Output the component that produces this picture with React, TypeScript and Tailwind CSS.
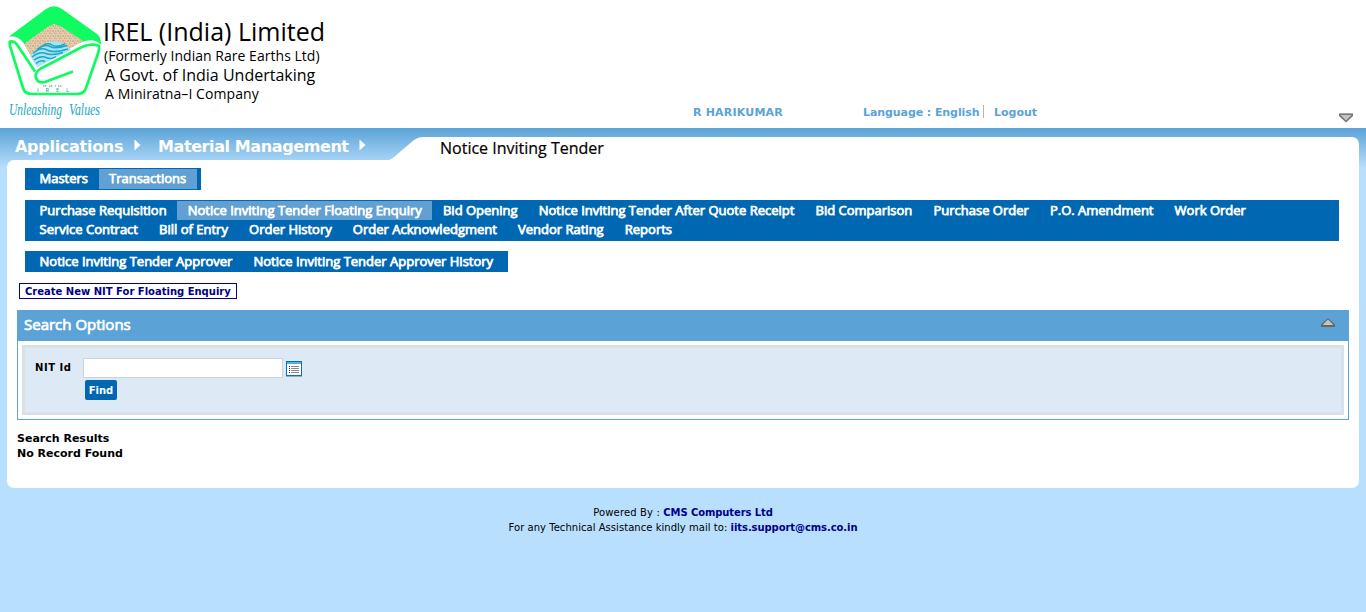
import React from 'react';

const menuText =
  "font-['Open_Sans',sans-serif] text-[13px] leading-[19px] font-normal text-white [-webkit-text-stroke:0.75px_white] whitespace-nowrap";
const verdana = "font-['DejaVu_Sans',sans-serif]";

const enquiryRows = [
  [
    'Purchase Requisition',
    'Notice Inviting Tender Floating Enquiry',
    'Bid Opening',
    'Notice Inviting Tender After Quote Receipt',
    'Bid Comparison',
    'Purchase Order',
    'P.O. Amendment',
    'Work Order',
  ],
  ['Service Contract', 'Bill of Entry', 'Order History', 'Order Acknowledgment', 'Vendor Rating', 'Reports'],
];

function Logo() {
  return (
    <svg width="104" height="122" viewBox="0 0 104 122" className="block shrink-0 overflow-visible">
      <defs>
        <pattern id="sand" width="5" height="5" patternUnits="userSpaceOnUse">
          <rect width="5" height="5" fill="#e8cba8" />
          <path d="M0 1h1M3 0v2M1 3v1M4 3h1" stroke="#a69588" strokeWidth="0.8" />
        </pattern>
      </defs>
      <path d="M9 36.500 L46 9 Q54 3.500 62 9 L97 34 Q101 37 101 44.500 C95 39 88 39 80 43 L54 24 L25 45 C20 37 15 36 9 36.500Z" fill="#10fb62" />
      <path d="M24 44 L46 28 Q54 21.500 62 27 L83 41 L54 58 L37 67Z" fill="url(#sand)" />
      <path d="M30 56 Q43 42 56 41 Q64 43 71 50 L37 67Z" fill="#a5e6f4" />
      <path
        d="M42 46q6-4 10-1t13-1M37 49.500q8-6 13-3t17-1M33 53.500q8-7 14-3.500t21-1M32 57q8-6 14-3.500t17-1M34 60q7-5 12-2.500t10-1M36 63.500q5-4 9-2"
        fill="none"
        stroke="#1fa3c6"
        strokeWidth="1.5"
      />
      <path
        d="M10 41.500 Q15 41 18 46 L34 68.500 Q36 71 40 69 L80 48 Q91 42.500 99 46 Q99.500 48 98.500 52 L86 88 Q84 94 77 94 L32 94 Q25 94 23 88 L10 46 Q9 43 10 41.500Z"
        fill="white"
      />
      <path
        d="M35 71.500 L18 46 Q15 41 10 41.500 Q9 43 10 46 L23 88 Q25 94 32 94 L77 94 Q84 94 86 88 L98.500 52 Q99.500 48 99 46 Q91 42.500 80 48 L40 69 C34 73 35 79 38.500 81.500 Q41 83 45 82 L73 71.500"
        fill="none"
        stroke="#10fb62"
        strokeWidth="2.700"
        strokeLinejoin="round"
      />
      <path d="M43 86h4M49 86h4M55 86h1M58 86h4" stroke="#aaa" strokeWidth="1.600" strokeDasharray="1.500 0.500" />
      <text x="37" y="92" fontSize="5.500" fontFamily="Open Sans" fontWeight="600" fill="#2ba9cf" textLength="32" lengthAdjust="spacing">
        IREL
      </text>
      <g fontSize="16" fontFamily="'Z003','URW Chancery L','Liberation Serif',cursive" fontStyle="italic" fill="#18a7c4">
        <text x="9" y="115" textLength="53" lengthAdjust="spacingAndGlyphs">
          Unleashing
        </text>
        <text x="69" y="115" textLength="31" lengthAdjust="spacingAndGlyphs">
          Values
        </text>
      </g>
    </svg>
  );
}

function Arrow() {
  return (
    <svg width="7" height="12" viewBox="0 0 7 12" className="mb-[5px] block shrink-0">
      <path d="M0.500 0.500L6.500 6L0.500 11.500Z" fill="white" />
    </svg>
  );
}

function Header() {
  return (
    <header className="flex h-[128px] bg-white text-black">
      <Logo />
      <div className="flex w-[589px] flex-col whitespace-nowrap pt-[15px] font-['Open_Sans',sans-serif]">
        <span className="-ml-px text-[25px] leading-[33px]">IREL (India) Limited</span>
        <span className="text-[14px] leading-[16px] tracking-[0.03px]">(Formerly Indian Rare Earths Ltd)</span>
        <span className="ml-px text-[16px] leading-[22px]">A Govt. of India Undertaking</span>
        <span className="ml-px text-[14px] leading-[16px] tracking-[0.07px]">A Miniratna–I Company</span>
      </div>
      <div className={`${verdana} flex flex-1 items-start pt-[105px] text-[11px] leading-[14px] font-bold whitespace-nowrap text-[#5ba3d7]`}>
        <span className="w-[170px] pt-px tracking-[0.2px]">R HARIKUMAR</span>
        <span className="mr-[3px] w-[117px] pt-px tracking-[-0.08px]">Language : English</span>
        <span className="h-[13px] w-px bg-[#b3b3b3]" />
        <span className="ml-[10px] pt-px">Logout</span>
        <svg width="16" height="12" viewBox="0 0 16 12" className="mt-[7px] mr-[12px] ml-auto block">
          <path d="M1 1.500H15V4L8 10.500L1 4Z" fill="#777" />
          <path d="M2.500 3H13.500L8 8.500Z" fill="#c4c4c4" />
          <path d="M1 1.500H15" stroke="#aaa" />
        </svg>
      </div>
    </header>
  );
}

function TitleBar() {
  return (
    <div className="flex h-[32px] pr-[7px] pl-[15px]">
      <div className={`${verdana} flex h-[32px] w-[374px] items-center pt-[6px] text-[16px] font-bold whitespace-nowrap text-white`}>
        <span className="w-[119px] tracking-[-0.28px]">Applications</span>
        <Arrow />
        <span className="ml-[17px] w-[201px] tracking-[-0.4px]">Material Management</span>
        <Arrow />
      </div>
      <svg width="36" height="23" viewBox="0 0 36 23" className="mt-[9px] block shrink-0">
        <path d="M0 23Q3 22 5 20L25 3Q29 0 34 0H36V23Z" fill="white" />
      </svg>
      <div className="mt-[9px] flex-1 rounded-tr-[7px] bg-white pl-[15px] font-['Open_Sans',sans-serif] text-[16px] leading-[23px] text-black [-webkit-text-stroke:0.2px_black]">
        Notice Inviting Tender
      </div>
    </div>
  );
}

function MenuItem({ label, active = false }: { label: string; active?: boolean }) {
  return <span className={`${menuText} px-[10.55px] ${active ? 'bg-[#61a0d2]' : ''}`}>{label}</span>;
}

function SearchPanel() {
  return (
    <section className="mt-[11px] ml-[10px] h-[110px] w-[1332px] border border-[#5ba3d7] bg-white">
      <div className="flex h-[30px] items-start justify-between bg-[#5ba3d7] pl-[6px]">
        <span className="font-['Open_Sans',sans-serif] text-[15px] leading-[27px] text-white [-webkit-text-stroke:0.7px_white]">
          Search Options
        </span>
        <svg width="16" height="12" viewBox="0 0 16 12" className="mt-[6px] mr-[12px] block">
          <path d="M8 1L15 7.500V10H1V7.500Z" fill="#666" />
          <path d="M8 2.500L13.500 8H2.500Z" fill="#c4c4c4" />
        </svg>
      </div>
      <div className="m-[4px] h-[70px] border-[3px] border-[#d8e0ea] bg-[#dde9f5] pt-[10px] pl-[10px]">
        <div className="flex items-start">
          <label className={`${verdana} w-[48px] pt-[3px] text-[10px] leading-[14px] font-bold tracking-[0.55px]`}>NIT Id</label>
          <input aria-label="NIT Id" className="h-[20px] w-[200px] border border-[#ccd3dc] bg-white" />
          <svg width="16" height="16" viewBox="0 0 16 16" className="mt-[3px] ml-[3px] block">
            <rect x="0.500" y="0.500" width="15" height="14" fill="white" stroke="#0872b9" />
            <path d="M1 2H15" stroke="#56aee6" strokeWidth="2" />
            <path d="M5 5.500H13M5 7.500H13M5 9.500H13M5 11.500H13" stroke="#8a8a8a" />
            <path d="M3 5.500h1M3 7.500h1M3 9.500h1M3 11.500h1" stroke="#333" />
            <path d="M0 15.500H16" stroke="#9caab5" />
          </svg>
        </div>
        <button className={`${verdana} mt-[2px] ml-[50px] block h-[20px] w-[32px] rounded-[2px] bg-[#0067b3] pt-px text-center text-[10px] leading-[19px] font-bold text-white`}>
          Find
        </button>
      </div>
    </section>
  );
}

export default function App() {
  return (
    <div className="flex h-[612px] w-[1366px] flex-col overflow-hidden bg-[#b8dffd]">
      <Header />
      <div className="bg-[linear-gradient(to_bottom,#5ba3d7_0px,#b8dffd_40px)]">
        <TitleBar />
        <main className="mx-[7px] h-[328px] rounded-tl-[7px] rounded-b-[7px] bg-white pt-[8px]">
          <nav className="ml-[18px] flex h-[22px] w-[176px] bg-[#0067b3] py-px pl-[4px]">
            <span className={`${menuText} w-[70px] pl-[10.5px]`}>Masters</span>
            <span className={`${menuText} h-[20px] w-[98px] bg-[#61a0d2] pl-[10px]`}>Transactions</span>
          </nav>
          <nav className="mt-[10px] ml-[18px] flex h-[41px] w-[1314px] flex-col bg-[#0067b3] pt-px pl-[4px]">
            {enquiryRows.map((row, r) => (
              <div key={r} className="flex h-[19px]">
                {row.map((label, i) => (
                  <MenuItem key={label} label={label} active={r === 0 && i === 1} />
                ))}
              </div>
            ))}
          </nav>
          <nav className="mt-[10px] ml-[18px] flex h-[21px] w-[483px] bg-[#0067b3] pt-px pl-[4px]">
            <MenuItem label="Notice Inviting Tender Approver" />
            <MenuItem label="Notice Inviting Tender Approver History" />
          </nav>
          <a className={`${verdana} mt-[11px] ml-[12px] block h-[16px] w-[218px] border border-[#00008b] pl-[5px] text-[10px] leading-[15px] font-bold whitespace-nowrap text-[#00008b]`}>
            Create New NIT For Floating Enquiry
          </a>
          <SearchPanel />
          <div className={`${verdana} mt-[11px] ml-[10px] text-[11px] leading-[15px] font-bold text-black`}>
            <p>Search Results</p>
            <p>No Record Found</p>
          </div>
        </main>
      </div>
      <footer className={`${verdana} pt-[17px] text-center text-[10px] leading-[15px] text-black`}>
        <p>
          <span className="tracking-[0.15px]">Powered By : </span>
          <b className="tracking-[-0.1px] text-[#00008b]">CMS Computers Ltd</b>
        </p>
        <p>
          <span className="tracking-[0.04px]">For any Technical Assistance kindly mail to: </span>
          <b className="tracking-[-0.08px] text-[#00008b]">iits.support@cms.co.in</b>
        </p>
      </footer>
    </div>
  );
}
